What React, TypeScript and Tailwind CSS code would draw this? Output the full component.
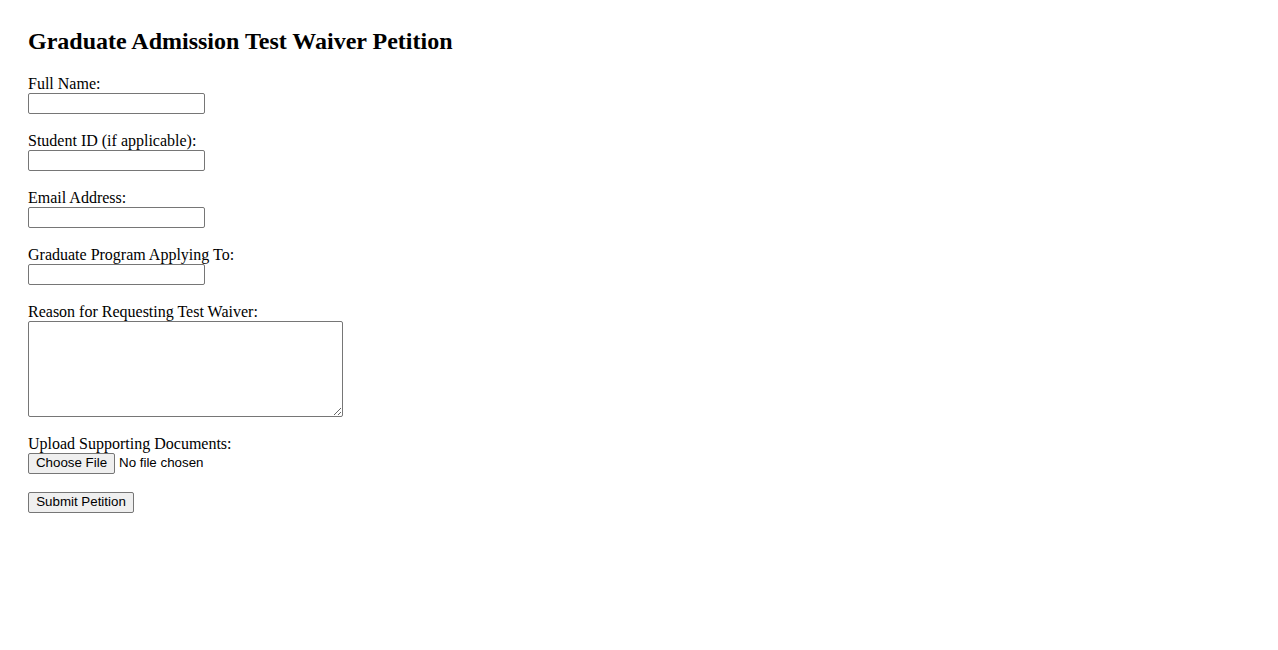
import { useState } from "react";

const fields = [
  { id: "fullName", label: "Full Name:", type: "text" },
  { id: "studentId", label: "Student ID (if applicable):", type: "text" },
  { id: "email", label: "Email Address:", type: "email" },
  { id: "program", label: "Graduate Program Applying To:", type: "text" },
];

export default function App() {
  const [values, setValues] = useState<Record<string, string>>({});
  const [reason, setReason] = useState("");

  const handleSubmit = (e: React.FormEvent) => {
    e.preventDefault();
  };

  return (
    <div className="min-h-screen bg-white pt-[28px] pl-[28px] font-['Liberation_Serif',serif] text-[16px] text-black">
      <h2 className="text-[24px] font-bold leading-[27.6px] mb-[19px]">
        Graduate Admission Test Waiver Petition
      </h2>

      <form onSubmit={handleSubmit} className="flex flex-col items-start">
        {fields.map((f) => (
          <div key={f.id} className="flex flex-col items-start mb-[18px]">
            <label htmlFor={f.id} className="block h-[18px] leading-[18px]">
              {f.label}
            </label>
            <input
              id={f.id}
              type={f.type}
              value={values[f.id] || ""}
              onChange={(e) => setValues({ ...values, [f.id]: e.target.value })}
              className="w-[177px] h-[21px] px-[2px] border border-[#767676] rounded-[2px] bg-white font-['Liberation_Sans',sans-serif] text-[13.33px] outline-none"
            />
          </div>
        ))}

        <div className="flex flex-col items-start mb-[18px]">
          <label htmlFor="reason" className="block h-[18px] leading-[18px]">
            Reason for Requesting Test Waiver:
          </label>
          <textarea
            id="reason"
            value={reason}
            onChange={(e) => setReason(e.target.value)}
            className="block w-[315px] h-[96px] p-[2px] border border-[#767676] rounded-[2px] bg-white font-['Liberation_Mono',monospace] text-[13.33px] outline-none"
          />
        </div>

        <div className="flex flex-col items-start mb-[18px]">
          <label className="block h-[18px] leading-[18px]">Upload Supporting Documents:</label>
          <div className="flex items-center h-[21px] font-['Liberation_Sans',sans-serif] text-[13.33px]">
            <button
              type="button"
              className="h-[21px] w-[87px] border border-[#767676] rounded-[2px] bg-[#efefef] leading-none"
            >
              Choose File
            </button>
            <span className="ml-[4px]">No file chosen</span>
          </div>
        </div>

        <button
          type="submit"
          className="h-[21px] w-[106px] border border-[#767676] rounded-[2px] bg-[#efefef] font-['Liberation_Sans',sans-serif] text-[13.33px] leading-none"
        >
          Submit Petition
        </button>
      </form>
    </div>
  );
}
